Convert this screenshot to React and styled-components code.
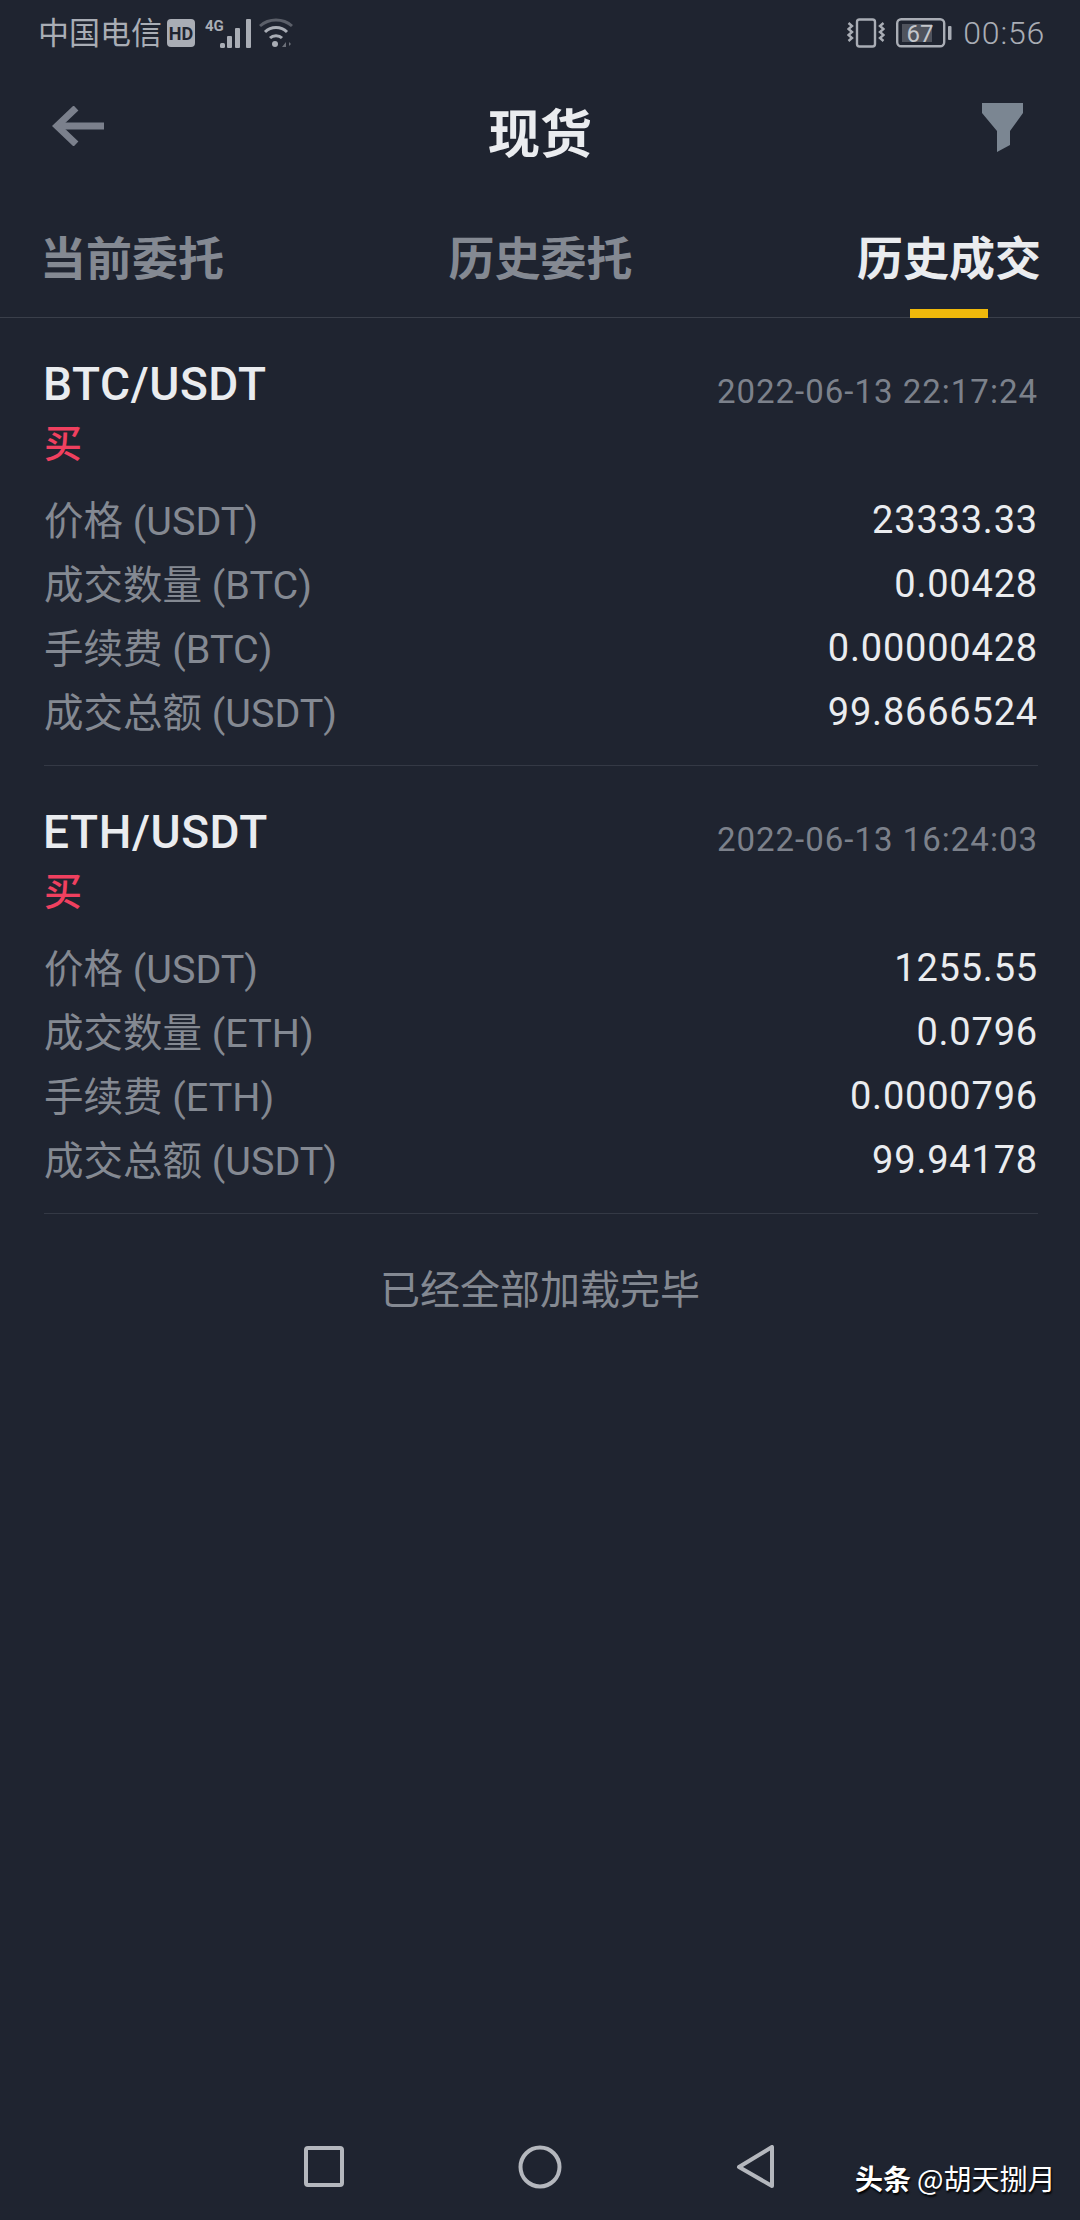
import React from "react";
import styled, { createGlobalStyle } from "styled-components";

const Global = createGlobalStyle`
  html, body { margin: 0; padding: 0; background: #1f2430; }
  body { font-family: "Roboto", "Noto Sans CJK SC", sans-serif; }
  * { box-sizing: border-box; }
`;

const Page = styled.div`
  position: relative;
  width: 1080px;
  height: 2220px;
  background: #1f2430;
  display: flex;
  flex-direction: column;
  overflow: hidden;
`;

const StatusBar = styled.div`
  height: 66px;
  padding: 0 35px 0 38px;
  display: flex;
  align-items: center;
  justify-content: space-between;
  color: #a9adb5;
`;
const StatusGroup = styled.div`
  display: flex;
  align-items: center;
`;
const Carrier = styled.span`
  font-size: 31px;
  font-family: "Noto Sans CJK SC", sans-serif;
  line-height: 40px;
  margin: 0 5px 5px 0;
`;
const Clock = styled.span`
  font-size: 32px;
  line-height: 40px;
  font-weight: 300;
  letter-spacing: 0.8px;
  margin-left: 11px;
`;

const Header = styled.div`
  height: 130px;
  padding: 0 52px;
  display: grid;
  grid-template-columns: 1fr auto 1fr;
  align-items: center;
`;
const Title = styled.h1`
  margin: 0 0 2px;
  font-size: 52px;
  font-weight: 700;
  color: #eaecef;
  font-family: "Noto Sans CJK SC", sans-serif;
`;
const HeaderStart = styled.div`
  display: flex;
  justify-content: flex-start;
  padding-bottom: 10px;
`;
const HeaderEnd = styled.div`
  display: flex;
  justify-content: flex-end;
  padding: 0 5px 7px 0;
`;

const Tabs = styled.div`
  height: 122px;
  padding: 0 39px 0 40px;
  display: flex;
  align-items: flex-start;
  justify-content: space-between;
  border-bottom: 1px solid #3a3f4a;
`;
const Tab = styled.div`
  position: relative;
  height: 122px;
  font-size: 46px;
  line-height: 119px;
  font-weight: 700;
  font-family: "Noto Sans CJK SC", sans-serif;
  color: ${(p) => (p.$active ? "#eaecef" : "#848992")};
`;
const Indicator = styled.div`
  position: absolute;
  left: 53px;
  bottom: 0;
  width: 78px;
  height: 9px;
  background: #f0b90b;
`;

const Item = styled.div`
  margin: 0 42px 0 44px;
  padding: 36px 0 21px;
  border-bottom: 1px solid #343945;
`;
const ItemHead = styled.div`
  height: 60px;
  display: flex;
  align-items: center;
  justify-content: space-between;
`;
const Pair = styled.span`
  font-size: 46px;
  font-weight: 500;
  color: #eaecef;
  letter-spacing: 0.6px;
  margin-left: -1px;
`;
const Time = styled.span`
  font-size: 33px;
  color: #7c818b;
  letter-spacing: 1px;
  margin-top: 14px;
`;
const Side = styled.div`
  height: 61px;
  margin-bottom: 13px;
  font-size: 38px;
  line-height: 54px;
  font-weight: 500;
  color: #f0405f;
  font-family: "Noto Sans CJK SC", sans-serif;
`;
const Row = styled.div`
  height: 64px;
  display: flex;
  align-items: center;
  justify-content: space-between;
`;
const Label = styled.span`
  font-size: 39.5px;
  color: #848992;
  margin-bottom: 6px;
`;
const Value = styled.span`
  font-size: 38px;
  color: #eaecef;
  letter-spacing: 0.8px;
`;
const EndNote = styled.div`
  margin-top: 35px;
  text-align: center;
  font-size: 40px;
  line-height: 76px;
  color: #848992;
  font-family: "Noto Sans CJK SC", sans-serif;
`;

const NavBar = styled.div`
  margin-top: auto;
  height: 106px;
  display: flex;
  align-items: flex-start;
  justify-content: center;
  gap: 172px;
  padding-top: 31px;
  color: #b4b7bd;
`;
const Watermark = styled.div`
  position: absolute;
  left: 855px;
  top: 2158px;
  display: flex;
  align-items: center;
  gap: 6px;
  color: #fff;
  font-size: 28px;
  line-height: 40px;
  font-family: "Noto Sans CJK SC", sans-serif;
  text-shadow: 1px 2px 2px #000;
`;
const WatermarkBrand = styled.b`
  font-weight: 700;
`;

const HdBadge = () => (
  <svg width="28" height="28" viewBox="0 0 28 28">
    <rect width="28" height="28" rx="4" fill="#a9adb5" />
    <text x="14" y="20.5" fontSize="18" fontWeight="700" textAnchor="middle" fill="#1f2430" fontFamily="Roboto">HD</text>
  </svg>
);
const Signal = () => (
  <svg width="47" height="30" viewBox="0 0 47 30" fill="#a9adb5" style={{ marginLeft: 10 }}>
    <text x="0" y="13" fontSize="15" fontWeight="700" fontFamily="Roboto">4G</text>
    <rect x="15" y="25" width="5" height="5" rx="1.500" />
    <rect x="22" y="18" width="5" height="12" rx="1" />
    <rect x="30" y="10" width="5" height="20" rx="1" />
    <rect x="41" y="1" width="5" height="29" rx="1" />
  </svg>
);
const Wifi = () => (
  <svg width="36" height="30" viewBox="0 0 36 30" fill="none" stroke="#a9adb5" strokeWidth="3" style={{ marginLeft: 6 }}>
    <path d="M2 8C11 0 25 0 34 8" stroke="#5b5f69" />
    <path d="M7 14C13 8 23 8 29 14" />
    <path d="M12 20C15 17 21 17 24 20" />
    <circle cx="17" cy="26" r="3" fill="#a9adb5" stroke="none" />
    <path d="M24 29l4-5v5zM31 24l2 2-2 2" fill="#6c7079" stroke="none" />
  </svg>
);
const Vibrate = () => (
  <svg width="38" height="30" viewBox="0 0 38 30" fill="none" stroke="#a9adb5" strokeWidth="2.400">
    <rect x="10" y="1.500" width="18" height="27" rx="2.500" />
    <path d="M1.500 5l3.500 3-3.500 3 3.500 3-3.500 3 3.500 3-3.500 3" />
    <path d="M36.500 5L33 8l3.500 3L33 14l3.500 3L33 20l3.500 3" />
  </svg>
);
const Battery = () => (
  <svg width="56" height="30" viewBox="0 0 56 30" style={{ marginLeft: 11 }}>
    <rect x="1.200" y="1.200" width="47" height="27" rx="4" fill="none" stroke="#a9adb5" strokeWidth="2.400" />
    <rect x="6" y="6" width="30" height="18" fill="#4f535d" />
    <rect x="52" y="8" width="3.500" height="14" rx="1" fill="#a9adb5" />
    <text x="24" y="24" fontSize="24" textAnchor="middle" fill="#c4c7cc" fontFamily="Roboto">67</text>
  </svg>
);
const BackArrow = () => (
  <svg width="52" height="40" viewBox="0 0 52 40" fill="none" stroke="#7b808c" strokeWidth="7">
    <path d="M52 20H5" />
    <path d="M24 2L5 20l19 18" />
  </svg>
);
const Filter = () => (
  <svg width="41" height="49" viewBox="0 0 41 49" fill="#7b8692">
    <path d="M0 0H41V10L28 28V42L15 49V28L0 10Z" />
  </svg>
);
const SquareIcon = () => (
  <svg width="44" height="44" viewBox="0 0 44 44" fill="none" stroke="currentColor" strokeWidth="4">
    <rect x="4" y="3" width="36" height="37" rx="2" />
  </svg>
);
const CircleIcon = () => (
  <svg width="44" height="44" viewBox="0 0 44 44" fill="none" stroke="currentColor" strokeWidth="4">
    <circle cx="22" cy="22" r="19.500" />
  </svg>
);
const TriangleIcon = () => (
  <svg width="44" height="44" viewBox="0 0 44 44" fill="none" stroke="currentColor" strokeWidth="4" strokeLinejoin="round">
    <path d="M38 2V41L5 22Z" />
  </svg>
);

const trades = [
  {
    pair: "BTC/USDT",
    time: "2022-06-13 22:17:24",
    rows: [
      ["价格 (USDT)", "23333.33"],
      ["成交数量 (BTC)", "0.00428"],
      ["手续费 (BTC)", "0.00000428"],
      ["成交总额 (USDT)", "99.8666524"],
    ],
  },
  {
    pair: "ETH/USDT",
    time: "2022-06-13 16:24:03",
    rows: [
      ["价格 (USDT)", "1255.55"],
      ["成交数量 (ETH)", "0.0796"],
      ["手续费 (ETH)", "0.0000796"],
      ["成交总额 (USDT)", "99.94178"],
    ],
  },
];

export default function App() {
  return (
    <Page>
      <Global />
      <StatusBar>
        <StatusGroup>
          <Carrier>中国电信</Carrier>
          <HdBadge />
          <Signal />
          <Wifi />
        </StatusGroup>
        <StatusGroup>
          <Vibrate />
          <Battery />
          <Clock>00:56</Clock>
        </StatusGroup>
      </StatusBar>
      <Header>
        <HeaderStart>
          <BackArrow />
        </HeaderStart>
        <Title>现货</Title>
        <HeaderEnd>
          <Filter />
        </HeaderEnd>
      </Header>
      <Tabs>
        <Tab>当前委托</Tab>
        <Tab>历史委托</Tab>
        <Tab $active>
          历史成交
          <Indicator />
        </Tab>
      </Tabs>
      {trades.map((t) => (
        <Item key={t.pair}>
          <ItemHead>
            <Pair>{t.pair}</Pair>
            <Time>{t.time}</Time>
          </ItemHead>
          <Side>买</Side>
          {t.rows.map(([k, v]) => (
            <Row key={k}>
              <Label>{k}</Label>
              <Value>{v}</Value>
            </Row>
          ))}
        </Item>
      ))}
      <EndNote>已经全部加载完毕</EndNote>
      <NavBar>
        <SquareIcon />
        <CircleIcon />
        <TriangleIcon />
      </NavBar>
      <Watermark>
        <WatermarkBrand>头条</WatermarkBrand>
        <span>@胡天捌月</span>
      </Watermark>
    </Page>
  );
}
